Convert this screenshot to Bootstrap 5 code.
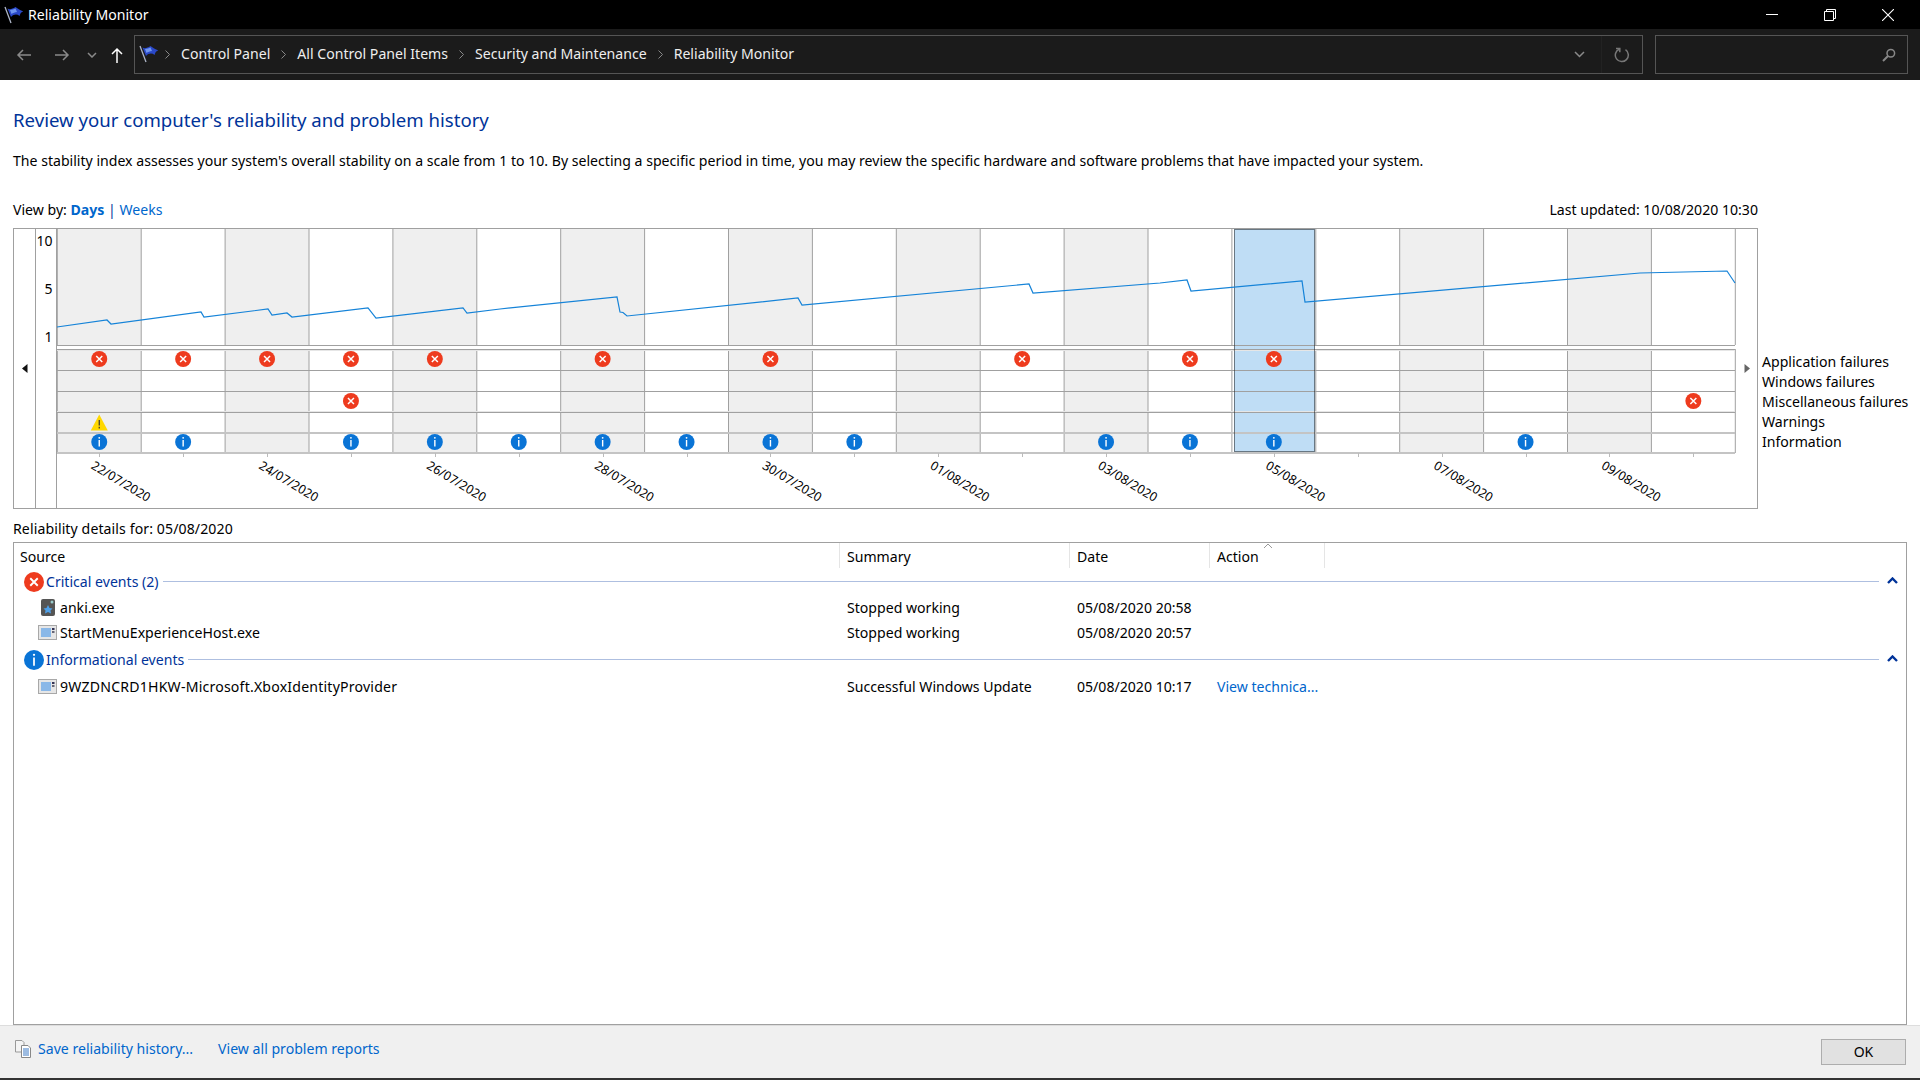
<!DOCTYPE html>
<html lang="en">
<head>
<meta charset="utf-8">
<title>Reliability Monitor</title>
<link href="https://cdn.jsdelivr.net/npm/bootstrap@5.3.0/dist/css/bootstrap.min.css" rel="stylesheet">
<style>
html,body{height:100%}
body{font-family:"Noto Sans","Liberation Sans",sans-serif;font-size:14.1px;color:#000;background:#fff;overflow:hidden;line-height:20px}
a{text-decoration:none;color:#06c}
.win-title{height:29px;background:#000;color:#fff;padding-left:3px}
.win-title .ttl{margin-left:5px}
.win-ctl{width:58px;height:29px}
.win-ctls{padding-right:3px}
.tool-bar{height:51px;background:#1b1b1b;color:#eee;padding-left:16px;padding-right:12px}
.nav-back{margin-right:22px}.nav-fwd{margin-right:17px}.nav-dd{margin-right:14px}.nav-up{margin-right:11px}
.addr-box{width:1509px;height:39px;border:1px solid #555;padding-left:3px}
.addr-box span{margin-bottom:2px}
.addr-flag{margin-right:-4px}
.addr-right{width:41px;height:37px;border-left:1px solid #222}
.crumb-sep{margin:0 11px}
.search-box{width:253px;height:39px;border:1px solid #555;margin-left:12px;padding-right:11px}
.page-main{padding:0 13px;min-height:0}
.page-h{font-size:18.6px;font-weight:400;color:#039;margin:0;padding-top:29px;line-height:22px}
.page-desc{margin:0;padding-top:20px}
.view-row{padding-top:29px;height:57px;width:1745px}
.view-row b{color:#06c}
.view-sep{color:#039}
.chart-frame{width:1745px;height:281px;border:1px solid #a0a0a0}
.nav-cell{width:22px;border-right:1px solid #a0a0a0}
.nav-cell-r{width:21px}
.chart-svg{display:block;width:1700px;height:279px;flex:none}
.chart-svg text{font-family:"Noto Sans",sans-serif}
.legend-col{padding:124px 0 0 4px;line-height:20px}
.detail-h{padding-top:10px;height:33px;letter-spacing:.1px}
.list-box{border:1px solid #a0a0a0;width:1894px;min-height:0}
.lv-row{display:grid;grid-template-columns:826px 230px 140px 115px}
.lv-row>div{padding-left:7px;white-space:nowrap}
.lv-head{height:26px}
.lv-head>div{border-right:1px solid #e5e5e5;height:25px;padding-top:4px}
.lv-head>div:first-child{padding-left:6px}
.lv-head .act-cell{position:relative}
.sort-mark{position:absolute;left:53px;top:0}
.lv-group{height:26px;padding-left:10px}
.lv-group a{color:#039;margin-left:2px}
.lv-group .rule{height:1px;background:#aebfe0;margin:-1px 8px 0 4px}
.lv-group .fold{margin-top:-3px}
.lv-group-b{margin-top:2px}
.lv-item{height:25px;align-items:center}
.lv-item-b{margin-top:1px}
.lv-item>div:first-child{padding-left:24px}
.src-cell{gap:3px}
.long-name{letter-spacing:.2px}
.footer-bar{height:53px;background:#f0f0f0;padding:0 14px 0 15px;border-top:1px solid #ddd}
.footer-end{height:2px;background:#333}
.foot-ic{margin-bottom:7px}
.foot-link{margin-left:7px;margin-bottom:7px}
.foot-link2{margin-left:25px;margin-bottom:7px}
.ok-btn{width:85px;height:26px;background:#e1e1e1;border:1px solid #adadad;border-radius:0;padding:0;font-size:14px;line-height:24px;color:#000}
</style>
</head>
<body class="d-flex flex-column">
<svg width="0" height="0" class="position-absolute">
<defs>
<g id="ic-err"><circle r="8" fill="#ee3b1e"/><path d="M-3-3 3 3M3-3-3 3" stroke="#fff" stroke-width="1.5"/></g>
<g id="ic-info"><circle r="8" fill="#0a74d6"/><path d="M0-2V4.5" stroke="#fff" stroke-width="1.4"/><circle cy="-4.2" r=".9" fill="#fff"/></g>
<g id="ic-warn"><path d="M0-8.5 8.5 7.5H-8.500Z" fill="#ffd800"/><path d="M0-3V2.5M0 3.8V5.400" stroke="#333" stroke-width="1.200"/></g>
<g id="ic-flag"><path d="M2 5 8 21" stroke="#aeb6c8" stroke-width="1.300"/><path d="M4.500 6.500C7 8 9 7 12.500 5C15 7 18 9 20.600 9.300C18 10 17 12 16.600 14C14 12 11 12 8 15Z" fill="#2a48c8"/><path d="M7 8C9 8 11 7 12.500 6.500L14 10C12 10 10 11 8.500 12Z" fill="#6f96f0"/></g>
<g id="ic-win"><rect x=".5" y=".5" width="18" height="14" fill="#e6e6e6" stroke="#a8a8a8"/><rect x="3" y="3" width="10" height="9" fill="#8ab8e8"/><rect x="14" y="3" width="2.500" height="2" fill="#335"/><rect x="14" y="6" width="2.500" height="2" fill="#667"/></g>
</defs>
</svg>
<div class="win-title d-flex align-items-center flex-none">
  <svg width="20" height="24" viewBox="0 0 20 24"><use href="#ic-flag" y="-1"/></svg>
  <span class="ttl">Reliability Monitor</span>
  <div class="win-ctls d-flex ms-auto">
    <div class="win-ctl d-flex align-items-center justify-content-center"><svg width="12" height="12"><path d="M0 5.500H12" stroke="#fff"/></svg></div>
    <div class="win-ctl d-flex align-items-center justify-content-center"><svg width="12" height="12"><path d="M.5 2.500H9.500V11.500H.5ZM2.500 2.500V.5H11.500V9.500H9.500" fill="none" stroke="#fff"/></svg></div>
    <div class="win-ctl d-flex align-items-center justify-content-center"><svg width="12" height="12"><path d="M0 0 12 12M12 0 0 12" stroke="#fff" stroke-width="1.100"/></svg></div>
  </div>
</div>
<div class="tool-bar d-flex align-items-center">
  <svg class="nav-back" width="16" height="14" viewBox="0 0 16 14"><path d="M15 7H2M7 2 2 7l5 5" fill="none" stroke="#8a8a8a" stroke-width="1.500"/></svg>
  <svg class="nav-fwd" width="16" height="14" viewBox="0 0 16 14"><path d="M1 7H14M9 2l5 5-5 5" fill="none" stroke="#8a8a8a" stroke-width="1.500"/></svg>
  <svg class="nav-dd" width="10" height="6" viewBox="0 0 10 6"><path d="M1 1 5 5 9 1" fill="none" stroke="#8a8a8a" stroke-width="1.500"/></svg>
  <svg class="nav-up" width="12" height="16" viewBox="0 0 12 16"><path d="M6 16V2M1 7l5-5 5 5" fill="none" stroke="#fff" stroke-width="1.500"/></svg>
  <div class="addr-box d-flex align-items-center">
    <svg class="addr-flag" width="20" height="22" viewBox="0 0 20 22"><use href="#ic-flag" y="-3"/></svg>
    <svg class="crumb-sep" width="5" height="9" viewBox="0 0 5 9"><path d="M.5.5l4 4-4 4" fill="none" stroke="#888"/></svg>
    <span>Control Panel</span>
    <svg class="crumb-sep" width="5" height="9" viewBox="0 0 5 9"><path d="M.5.5l4 4-4 4" fill="none" stroke="#888"/></svg>
    <span>All Control Panel Items</span>
    <svg class="crumb-sep" width="5" height="9" viewBox="0 0 5 9"><path d="M.5.5l4 4-4 4" fill="none" stroke="#888"/></svg>
    <span>Security and Maintenance</span>
    <svg class="crumb-sep" width="5" height="9" viewBox="0 0 5 9"><path d="M.5.5l4 4-4 4" fill="none" stroke="#888"/></svg>
    <span>Reliability Monitor</span>
    <svg class="ms-auto me-3" width="11" height="7" viewBox="0 0 11 7"><path d="M1 1 5.500 5.500 10 1" fill="none" stroke="#8a8a8a" stroke-width="1.500"/></svg>
    <div class="addr-right d-flex align-items-center justify-content-center">
      <svg width="16" height="16" viewBox="0 0 16 16"><path d="M5 2.200A6.500 6.500 0 1 0 11.500 2.700" fill="none" stroke="#777" stroke-width="1.500"/><path d="M2 1.500H5.800V5.300" fill="none" stroke="#777" stroke-width="1.500"/></svg>
    </div>
  </div>
  <div class="search-box d-flex align-items-center justify-content-end">
    <svg width="14" height="14" viewBox="0 0 14 14"><circle cx="8.800" cy="5.200" r="3.800" fill="none" stroke="#888" stroke-width="1.500"/><path d="M6 8 1 13" stroke="#888" stroke-width="2"/></svg>
  </div>
</div>
<main class="page-main flex-grow-1 d-flex flex-column">
  <h1 class="page-h">Review your computer's reliability and problem history</h1>
  <p class="page-desc">The stability index assesses your system's overall stability on a scale from 1 to 10. By selecting a specific period in time, you may review the specific hardware and software problems that have impacted your system.</p>
  <div class="view-row d-flex justify-content-between">
    <div>View by: <a href="#"><b>Days</b></a> <span class="view-sep">|</span> <a href="#">Weeks</a></div>
    <div>Last updated: 10/08/2020 10:30</div>
  </div>
  <div class="d-flex">
    <div class="chart-frame d-flex flex-none">
      <div class="nav-cell d-flex align-items-center justify-content-center">
        <svg width="6" height="9" viewBox="0 0 6 9"><path d="M5.500 0V9L0 4.500Z" fill="#111"/></svg>
      </div>
      <svg id="chart" class="chart-svg" viewBox="36 229 1700 279"></svg>
      <div class="nav-cell-r d-flex align-items-center justify-content-center">
        <svg width="6" height="9" viewBox="0 0 6 9"><path d="M.5 0V9L6 4.500Z" fill="#666"/></svg>
      </div>
    </div>
    <div class="legend-col text-nowrap">
      <div>Application failures</div>
      <div>Windows failures</div>
      <div>Miscellaneous failures</div>
      <div>Warnings</div>
      <div>Information</div>
    </div>
  </div>
  <div class="detail-h">Reliability details for: 05/08/2020</div>
  <div class="list-box flex-grow-1">
    <div class="lv-row lv-head">
      <div>Source</div><div>Summary</div><div>Date</div>
      <div class="act-cell">Action
        <svg class="sort-mark" width="10" height="6" viewBox="0 0 10 6"><path d="M1 5 5 1 9 5" fill="none" stroke="#999"/></svg>
      </div>
    </div>
    <div class="lv-group d-flex align-items-center">
      <svg width="20" height="20" viewBox="-8 -8 16 16"><use href="#ic-err"/></svg>
      <a href="#">Critical events (2)</a>
      <div class="rule flex-grow-1"></div>
      <svg class="fold me-2" width="11" height="7" viewBox="0 0 11 7"><path d="M1 6 5.500 1.500 10 6" fill="none" stroke="#039" stroke-width="2.400"/></svg>
    </div>
    <div class="lv-row lv-item">
      <div class="d-flex align-items-center src-cell"><svg width="19" height="17" viewBox="0 0 19 17"><rect x="3" y="0" width="14" height="17" rx="2" fill="#555"/><path d="M10 6l1.500 3 3 .5-2 2 .5 3-3-1.500-3 1.500.5-3-2-2 3-.5z" fill="#4fa0e8"/><circle cx="14" cy="3" r="1.500" fill="#9cc"/></svg><span>anki.exe</span></div>
      <div>Stopped working</div><div>05/08/2020 20:58</div><div></div>
    </div>
    <div class="lv-row lv-item">
      <div class="d-flex align-items-center src-cell"><svg width="19" height="15" viewBox="0 0 19 15"><use href="#ic-win"/></svg><span>StartMenuExperienceHost.exe</span></div>
      <div>Stopped working</div><div>05/08/2020 20:57</div><div></div>
    </div>
    <div class="lv-group lv-group-b d-flex align-items-center">
      <svg width="20" height="20" viewBox="-8 -8 16 16"><use href="#ic-info"/></svg>
      <a href="#">Informational events</a>
      <div class="rule flex-grow-1"></div>
      <svg class="fold me-2" width="11" height="7" viewBox="0 0 11 7"><path d="M1 6 5.500 1.500 10 6" fill="none" stroke="#039" stroke-width="2.400"/></svg>
    </div>
    <div class="lv-row lv-item lv-item-b">
      <div class="d-flex align-items-center src-cell"><svg width="19" height="15" viewBox="0 0 19 15"><use href="#ic-win"/></svg><span class="long-name">9WZDNCRD1HKW-Microsoft.XboxIdentityProvider</span></div>
      <div>Successful Windows Update</div><div>05/08/2020 10:17</div><div><a href="#">View technica...</a></div>
    </div>
  </div>
</main>
<footer class="footer-bar d-flex align-items-center">
  <svg class="foot-ic" width="16" height="18" viewBox="0 0 16 18"><path d="M.5.5H7L9 2.500V12H.5Z" fill="#f4f4f4" stroke="#999"/><path d="M6.500 5.500H13L15.500 8V17.500H6.500Z" fill="#fff" stroke="#888"/><path d="M8 9h6M8 11h6M8 13h6M8 15h6" stroke="#3b78c4"/></svg>
  <a class="foot-link" href="#">Save reliability history...</a>
  <a class="foot-link2" href="#">View all problem reports</a>
  <button class="btn ok-btn ms-auto" type="button">OK</button>
</footer>
<div class="footer-end"></div>
<script>
(function(){
var s='',X0=57.3,W=83.9,cx=function(i){return X0+W*(i+.5)},i;
for(i=0;i<20;i+=2){if(i==14)continue;s+='<rect x="'+(X0+W*i)+'" y="229" width="'+W+'" height="116" fill="#efefef"/><rect x="'+(X0+W*i)+'" y="350" width="'+W+'" height="103" fill="#efefef"/>';}
s+='<rect x="1234" y="229" width="81" height="224" fill="#0078d7" fill-opacity=".25"/>';
for(i=0;i<=20;i++){var x=X0+W*i;s+='<path d="M'+x+' 229V345M'+x+' 349V453" stroke="#a0a0a0"/>';}
s+='<path d="M56.500 229V508" stroke="#a0a0a0"/>';
s+='<path d="M57 345.500H1735M57 349.500H1735M57 370.500H1735M57 391.500H1735M57 412.500H1735M57 453.500H1735" stroke="#a0a0a0"/><path d="M57 350.500H1735M57 411.500H1735" stroke="#e6e6e6"/><path d="M57 433H1735" stroke="#c4c4c4" stroke-width="2"/><path d="M57 453H1735" stroke="#c4c4c4" stroke-width="2"/>';
s+='<rect x="1234.500" y="229.500" width="80" height="222" fill="none" stroke="#111" stroke-dasharray="1 1"/>';
s+='<polyline fill="none" stroke="#1583d8" stroke-width="1.200" points="57,327 107,320 111,324 201,312 204,317 268,309 272,315 287,313 292,317 368,308 376,318 463,308 467,313 500,309 617,297 620,312 623,312.500 627,316 798,298 802,305 1029,284 1033,293 1160,283 1187,280 1191,291 1302,281 1305,302 1640,273 1727,271 1735,283"/>';
for(i=0;i<20;i++)s+='<path d="M'+Math.round(cx(i))+'.5 453V457" stroke="#bbb"/>';
[0,1,2,3,4,6,8,11,13,14].forEach(function(c){s+='<use href="#ic-err" x="'+cx(c)+'" y="359"/>'});
[3,19].forEach(function(c){s+='<use href="#ic-err" x="'+cx(c)+'" y="401"/>'});
s+='<use href="#ic-warn" x="'+cx(0)+'" y="423"/>';
[0,1,3,4,5,6,7,8,9,12,13,14,17].forEach(function(c){s+='<use href="#ic-info" x="'+cx(c)+'" y="442"/>'});
['22/07/2020','24/07/2020','26/07/2020','28/07/2020','30/07/2020','01/08/2020','03/08/2020','05/08/2020','07/08/2020','09/08/2020'].forEach(function(d,k){
 var x=cx(2*k)-9;
 s+='<text x="'+x+'" y="468" font-size="12.5" transform="rotate(31 '+x+' 468)">'+d+'</text>';
 s+='<rect x="'+(cx(2*k)+43)+'" y="506" width="2" height="3" fill="#fff"/>';
});
s+='<text x="52.500" y="246" font-size="14" text-anchor="end">10</text><text x="52.500" y="294" font-size="14" text-anchor="end">5</text><text x="52.500" y="342" font-size="14" text-anchor="end">1</text>';
document.getElementById('chart').innerHTML=s;
})();
</script>
<script src="https://cdn.jsdelivr.net/npm/bootstrap@5.3.0/dist/js/bootstrap.bundle.min.js"></script>
</body>
</html>
